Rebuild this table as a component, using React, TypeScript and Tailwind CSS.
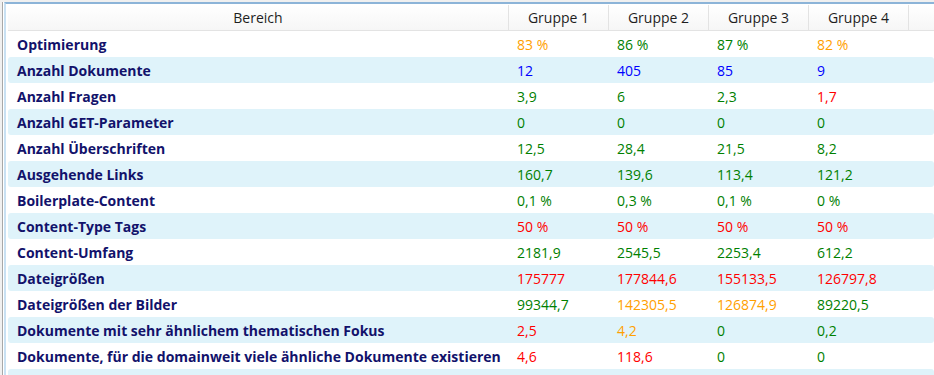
import React from "react";

type Cell = { v: string; c: "o" | "g" | "b" | "r" };

const colorCls: Record<Cell["c"], string> = {
  o: "text-[#ffa000]",
  g: "text-[#008000]",
  b: "text-[#0000ff]",
  r: "text-[#ff0000]",
};

const rows: { label: string; cells: Cell[] }[] = [
  { label: "Optimierung", cells: [{ v: "83 %", c: "o" }, { v: "86 %", c: "g" }, { v: "87 %", c: "g" }, { v: "82 %", c: "o" }] },
  { label: "Anzahl Dokumente", cells: [{ v: "12", c: "b" }, { v: "405", c: "b" }, { v: "85", c: "b" }, { v: "9", c: "b" }] },
  { label: "Anzahl Fragen", cells: [{ v: "3,9", c: "g" }, { v: "6", c: "g" }, { v: "2,3", c: "g" }, { v: "1,7", c: "r" }] },
  { label: "Anzahl GET-Parameter", cells: [{ v: "0", c: "g" }, { v: "0", c: "g" }, { v: "0", c: "g" }, { v: "0", c: "g" }] },
  { label: "Anzahl Überschriften", cells: [{ v: "12,5", c: "g" }, { v: "28,4", c: "g" }, { v: "21,5", c: "g" }, { v: "8,2", c: "g" }] },
  { label: "Ausgehende Links", cells: [{ v: "160,7", c: "g" }, { v: "139,6", c: "g" }, { v: "113,4", c: "g" }, { v: "121,2", c: "g" }] },
  { label: "Boilerplate-Content", cells: [{ v: "0,1 %", c: "g" }, { v: "0,3 %", c: "g" }, { v: "0,1 %", c: "g" }, { v: "0 %", c: "g" }] },
  { label: "Content-Type Tags", cells: [{ v: "50 %", c: "r" }, { v: "50 %", c: "r" }, { v: "50 %", c: "r" }, { v: "50 %", c: "r" }] },
  { label: "Content-Umfang", cells: [{ v: "2181,9", c: "g" }, { v: "2545,5", c: "g" }, { v: "2253,4", c: "g" }, { v: "612,2", c: "g" }] },
  { label: "Dateigrößen", cells: [{ v: "175777", c: "r" }, { v: "177844,6", c: "r" }, { v: "155133,5", c: "r" }, { v: "126797,8", c: "r" }] },
  { label: "Dateigrößen der Bilder", cells: [{ v: "99344,7", c: "g" }, { v: "142305,5", c: "o" }, { v: "126874,9", c: "o" }, { v: "89220,5", c: "g" }] },
  { label: "Dokumente mit sehr ähnlichem thematischen Fokus", cells: [{ v: "2,5", c: "r" }, { v: "4,2", c: "o" }, { v: "0", c: "g" }, { v: "0,2", c: "g" }] },
  { label: "Dokumente, für die domainweit viele ähnliche Dokumente existieren", cells: [{ v: "4,6", c: "r" }, { v: "118,6", c: "r" }, { v: "0", c: "g" }, { v: "0", c: "g" }] },
];

const gridCols = "grid grid-cols-[501px_100px_100px_100px_100px_1fr]";

export default function App() {
  return (
    <div
      className="w-[934px] h-[375px] overflow-hidden bg-[#f0f0f0] pl-[2px] pt-[2px]"
      style={{ fontFamily: '"Open Sans", "Noto Sans", sans-serif' }}
    >
      <div className="h-full border-l border-[#a8a8a8] bg-white pl-px">
        <div className="h-full border-l-2 border-t-2 border-[#c9e1f3] border-t-[#8cb4d8] pl-[2px] pt-px">
          {/* header */}
          <div className={`${gridCols} h-[26px] border-b border-[#e3e3e3] bg-gradient-to-b from-white to-[#f6f6f6] text-[14px] text-[#1e1e1e]`}>
            <div className="flex items-center justify-center border-r border-[#e3e3e3]">Bereich</div>
            <div className="flex items-center justify-center border-r border-[#e3e3e3]">Gruppe 1</div>
            <div className="flex items-center justify-center border-r border-[#e3e3e3]">Gruppe 2</div>
            <div className="flex items-center justify-center border-r border-[#e3e3e3]">Gruppe 3</div>
            <div className="flex items-center justify-center border-r border-[#e3e3e3]">Gruppe 4</div>
            <div />
          </div>
          {/* rows */}
          <div className="flex flex-col">
            {rows.concat([{ label: "", cells: [] }]).map((r, i) => (
              <div
                key={i}
                className={`${gridCols} h-[26px] items-center rounded-[3px] ${i % 2 === 1 ? "bg-[#dff3fa]" : "bg-white"}`}
              >
                <div className="pl-[9px] text-[14px] font-bold text-[#12126b] whitespace-nowrap">{r.label}</div>
                {r.cells.map((c, j) => (
                  <div key={j} className={`pl-[8px] text-[14px] whitespace-nowrap ${colorCls[c.c]}`}>
                    {c.v}
                  </div>
                ))}
              </div>
            ))}
          </div>
        </div>
      </div>
    </div>
  );
}
